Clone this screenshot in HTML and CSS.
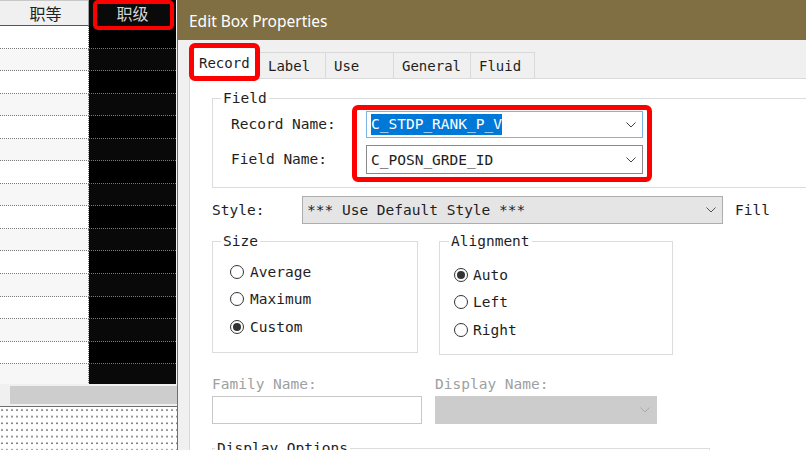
FILE: index.html
```html
<!DOCTYPE html>
<html>
<head>
<meta charset="utf-8">
<title>Edit Box Properties</title>
<link rel="stylesheet" href="styles.css">
</head>
<body>
<div class="screen">
  <div class="grid-pane">
    <div class="grid-head">
      <div class="hcell hcell-light">职等</div>
      <div class="hcell hcell-dark">职级<span class="mark-head"></span></div>
    </div>
    <div class="grid-rows">
      <div class="grow"><div class="gcell c1"></div><div class="gcell c2"></div></div>
      <div class="grow"><div class="gcell c1"></div><div class="gcell c2"></div></div>
      <div class="grow"><div class="gcell c1"></div><div class="gcell c2"></div></div>
      <div class="grow"><div class="gcell c1"></div><div class="gcell c2"></div></div>
      <div class="grow"><div class="gcell c1"></div><div class="gcell c2"></div></div>
      <div class="grow"><div class="gcell c1"></div><div class="gcell c2"></div></div>
      <div class="grow"><div class="gcell c1"></div><div class="gcell c2"></div></div>
      <div class="grow"><div class="gcell c1"></div><div class="gcell c2"></div></div>
      <div class="grow"><div class="gcell c1"></div><div class="gcell c2"></div></div>
      <div class="grow"><div class="gcell c1"></div><div class="gcell c2"></div></div>
      <div class="grow"><div class="gcell c1"></div><div class="gcell c2"></div></div>
      <div class="grow"><div class="gcell c1"></div><div class="gcell c2"></div></div>
      <div class="grow"><div class="gcell c1"></div><div class="gcell c2"></div></div>
      <div class="grow"><div class="gcell c1"></div><div class="gcell c2"></div></div>
      <div class="grow"><div class="gcell c1"></div><div class="gcell c2"></div></div>
      <div class="grow"><div class="gcell c1"></div><div class="gcell c2"></div></div>
    </div>
    <div class="hscroll"><div class="thumb"></div></div>
    <div class="dots"></div>
  </div>

  <div class="dialog">
    <div class="titlebar">Edit Box Properties</div>
    <div class="tabstrip">
      <div class="tab tab-active">Record</div>
      <div class="tab tab-label">Label</div>
      <div class="tab tab-use">Use</div>
      <div class="tab tab-general">General</div>
      <div class="tab tab-fluid">Fluid</div>
    </div>
    <div class="panel">
      <fieldset class="group group-field">
        <legend>Field</legend>
        <div class="field-row">
          <div class="field-labels">
            <div class="flabel flabel-1">Record Name:</div>
            <div class="flabel flabel-2">Field Name:</div>
          </div>
          <div class="redbox">
            <div class="combo combo-focus">
              <span class="sel">C_STDP_RANK_P_V</span>
              <svg class="chev" width="10" height="6" viewBox="0 0 10 6"><polyline points="0.5,0.5 5,5 9.5,0.5" fill="none" stroke="#444" stroke-width="1"/></svg>
            </div>
            <div class="combo combo-plain">
              <span class="ctext">C_POSN_GRDE_ID</span>
              <svg class="chev" width="10" height="6" viewBox="0 0 10 6"><polyline points="0.5,0.5 5,5 9.5,0.5" fill="none" stroke="#444" stroke-width="1"/></svg>
            </div>
          </div>
        </div>
      </fieldset>

      <div class="style-row">
        <div class="style-label">Style:</div>
        <div class="style-select">
          <span class="ctext">*** Use Default Style ***</span>
          <svg class="chev" width="10" height="6" viewBox="0 0 10 6"><polyline points="0.5,0.5 5,5 9.5,0.5" fill="none" stroke="#555" stroke-width="1"/></svg>
        </div>
        <div class="fill-label">Fill</div>
      </div>

      <div class="groups-row">
        <fieldset class="group group-size">
          <legend>Size</legend>
          <div class="radio"><span class="radio-dot"></span>Average</div>
          <div class="radio"><span class="radio-dot"></span>Maximum</div>
          <div class="radio radio-on"><span class="radio-dot"></span>Custom</div>
        </fieldset>
        <fieldset class="group group-align">
          <legend>Alignment</legend>
          <div class="radio radio-on"><span class="radio-dot"></span>Auto</div>
          <div class="radio"><span class="radio-dot"></span>Left</div>
          <div class="radio"><span class="radio-dot"></span>Right</div>
        </fieldset>
      </div>

      <div class="names-row">
        <div class="name-col name-family">
          <div class="dlabel">Family Name:</div>
          <div class="textbox"></div>
        </div>
        <div class="name-col name-display">
          <div class="dlabel">Display Name:</div>
          <div class="combo-disabled">
            <svg class="chev" width="10" height="6" viewBox="0 0 10 6"><polyline points="0.5,0.5 5,5 9.5,0.5" fill="none" stroke="#a9a9a9" stroke-width="1"/></svg>
          </div>
        </div>
      </div>

      <fieldset class="group group-display">
        <legend>Display Options</legend>
      </fieldset>
    </div>
  </div>
</div>
</body>
</html>
```

FILE: styles.css
```css
* { box-sizing: border-box; }
html, body { margin: 0; padding: 0; }
body {
  width: 806px;
  height: 450px;
  overflow: hidden;
  background: #fff;
  font-family: "DejaVu Sans Mono", "Liberation Mono", monospace;
  font-size: 14.5px;
  color: #1e1e1e;
}
.screen { display: flex; width: 806px; height: 450px; }

/* ---------- left grid pane ---------- */
.grid-pane {
  width: 177px;
  flex: none;
  display: flex;
  flex-direction: column;
  background: #f4f4f4;
}
.grid-head { display: flex; height: 26px; flex: none; }
.hcell {
  height: 26px;
  display: flex;
  align-items: center;
  justify-content: center;
  font-family: "Noto Sans CJK SC", "Noto Sans", sans-serif;
  font-size: 16px;
}
.hcell-light {
  width: 89px;
  background: #f0f0f0;
  color: #222;
  border-top: 1px solid #c8c8c8;
  border-right: 1px solid #a0a0a0;
  border-bottom: 1px solid #555;
  padding-left: 3px;
}
.hcell-dark {
  width: 87px;
  background: #0a0a0a;
  color: #d4d4d4;
  position: relative;
}
.mark-head {
  position: absolute;
  top: 0;
  left: 4px;
  width: 81px;
  height: 30px;
  border: 4px solid #ff0000;
  border-radius: 5px;
}
.grid-rows { height: 358px; overflow: hidden; flex: none; }
.grow { display: flex; height: 22.55px; }
.gcell { height: 100%; border-bottom: 1px dotted #7a7a7a; }
.c1 { width: 89px; background: #fff; border-right: 1px dotted #7a7a7a; }
.c2 { width: 87px; background: #000; }
.grow:nth-child(even) .c1 { background: #f7f7f7; }
.grow:nth-child(even) .c2 { background: #090909; }
.hscroll {
  height: 23px;
  flex: none;
  background: #f0f0f0;
  border-bottom: 1px solid #6d6d6d;
  padding: 2px 0 2px 10px;
}
.thumb { height: 18px; background: #cdcdcd; }
.dots {
  flex: 1;
  background-color: #fff;
  background-image: radial-gradient(ellipse 1.2px 0.8px at 2px 3px, #7d7d7d 0.9px, transparent 1.3px);
  background-size: 5px 6.67px;
}

/* ---------- dialog ---------- */
.dialog {
  flex: 1;
  min-width: 0;
  display: flex;
  flex-direction: column;
  border-left: 1px solid #806f42;
  background: #f0f0f0;
}
.titlebar {
  height: 40px;
  flex: none;
  background: #806f42;
  color: #fff;
  font-family: "Noto Sans", "Open Sans", sans-serif;
  font-size: 15.5px;
  padding: 2px 0 0 11px;
  display: flex;
  align-items: center;
}
.tabstrip {
  height: 38px;
  flex: none;
  display: flex;
  align-items: flex-end;
  padding-left: 11px;
}
.tab {
  height: 26px;
  padding-left: 8px;
  border: 1px solid #d9d9d9;
  border-left: none;
  border-bottom: none;
  background: #f0f0f0;
  font-size: 14px;
  line-height: 26px;
  color: #1e1e1e;
}
.tab-active {
  width: 71px;
  height: 38px;
  margin-bottom: -3px;
  padding: 1px 0 0 5px;
  border: 5px solid #ff0000;
  border-radius: 6px;
  background: #fff;
  line-height: 28px;
  position: relative;
  z-index: 1;
}
.tab-label { width: 66px; }
.tab-use { width: 68px; }
.tab-general { width: 77px; }
.tab-fluid { width: 64px; }

.panel {
  flex: 1;
  margin-left: 11px;
  border-left: 1px solid #dadada;
  border-top: 1px solid #dadada;
  background: #fff;
  padding-left: 22px;
  overflow: hidden;
}

/* group boxes */
.group {
  margin: 0;
  padding: 0;
  min-width: 0;
  border: 1px solid #dcdcdc;
}
.group legend {
  padding: 0 2px;
  line-height: 16px;
  font-size: 14.5px;
  color: #1e1e1e;
}
.group-field {
  margin-top: 11px;
  width: 640px;
  padding: 0 0 5px 18px;
}
.group-field legend { margin-left: -10px; }

.field-row { display: flex; align-items: flex-start; margin-top: -1px; }
.field-labels {
  width: 121px;
  flex: none;
  display: flex;
  flex-direction: column;
  gap: 7px;
  padding-top: 6px;
}
.flabel-1 { height: 27px; line-height: 27px; }
.flabel-2 { height: 29px; line-height: 29px; }
.redbox {
  width: 300px;
  border: 5px solid #ff0000;
  border-radius: 6px;
  padding: 1px 4px 3px 9px;
  display: flex;
  flex-direction: column;
  gap: 7px;
}
.combo {
  display: flex;
  align-items: center;
  justify-content: space-between;
  background: #fff;
  padding: 0 6px 0 4px;
}
.combo-focus { height: 27px; border: 1px solid #7cb4e8; }
.combo-plain { height: 29px; border: 1px solid #8a8a8a; }
.sel {
  background: #0078d7;
  color: #fff;
  line-height: 21px;
  display: inline-block;
}
.ctext { line-height: 20px; }
.chev { flex: none; display: block; }

/* style row */
.style-row {
  display: flex;
  align-items: center;
  margin-top: 8px;
  height: 28px;
}
.style-label { width: 90px; flex: none; }
.style-select {
  width: 421px;
  height: 28px;
  flex: none;
  display: flex;
  align-items: center;
  justify-content: space-between;
  background: #e5e5e5;
  border: 1px solid #adadad;
  padding: 0 6px 0 4px;
}
.fill-label { margin-left: 12px; }

/* size / alignment */
.groups-row {
  display: flex;
  align-items: flex-start;
  margin-top: 9px;
}
.group-size {
  width: 206px;
  height: 120px;
  padding: 9px 0 0 17px;
}
.group-size legend { margin-left: -9px; }
.group-align {
  width: 234px;
  height: 122px;
  margin-left: 21px;
  padding: 12px 0 0 14px;
}
.group-align legend { margin-left: -5px; }
.radio {
  display: flex;
  align-items: center;
  height: 27.6px;
}
.group-align .radio { height: 27.5px; }
.radio-dot {
  width: 14px;
  height: 14px;
  flex: none;
  border: 1px solid #333;
  border-radius: 50%;
  background: #fff;
  margin-right: 6px;
  display: flex;
  align-items: center;
  justify-content: center;
}
.group-align .radio-dot { margin-right: 5px; }
.radio-on .radio-dot::after {
  content: "";
  width: 8px;
  height: 8px;
  border-radius: 50%;
  background: #333;
}

/* family / display names */
.names-row {
  display: flex;
  align-items: flex-start;
  margin-top: 21px;
}
.name-family { width: 210px; }
.name-display { width: 222px; margin-left: 13px; }
.dlabel {
  line-height: 16px;
  color: #a0a0a0;
  margin-bottom: 4px;
}
.textbox {
  height: 28px;
  border: 1px solid #c8c8c8;
  background: #fff;
}
.combo-disabled {
  height: 28px;
  background: #cccccc;
  border: 1px solid #cccccc;
  display: flex;
  align-items: center;
  justify-content: flex-end;
  padding-right: 6px;
}

.group-display {
  margin-top: 16px;
  width: 498px;
  height: 80px;
  padding: 0 0 0 2px;
}
```
